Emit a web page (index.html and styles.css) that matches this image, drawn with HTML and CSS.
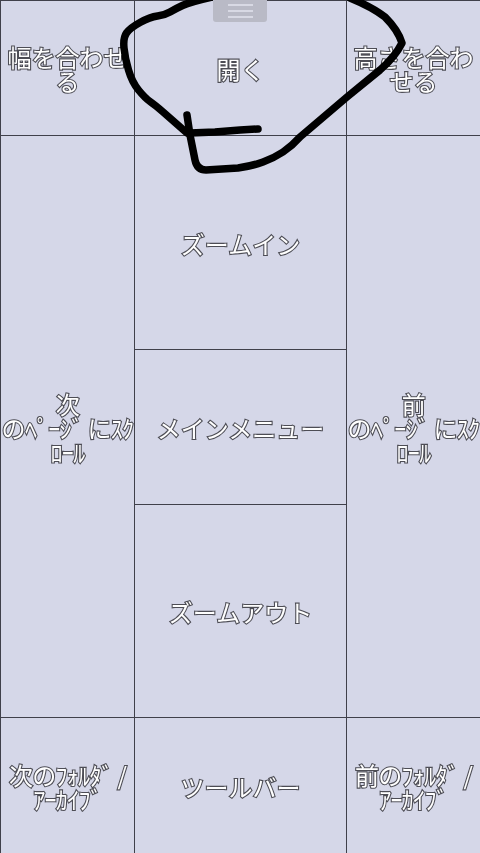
FILE: index.html
```html
<!DOCTYPE html>
<html lang="ja">
<head>
<meta charset="utf-8">
<title>タップ領域</title>
<link rel="stylesheet" href="styles.css">
</head>
<body>
<main class="grid">
  <div class="cell top left c-fitw">幅を合わせる</div>
  <div class="cell top c-open">開く</div>
  <div class="cell top last c-fith">高さを合わせる</div>
  <div class="cell left tight c-next">次<br>のﾍﾟｰｼﾞ にｽｸﾛｰﾙ</div>
  <div class="cell c-in">ズームイン</div>
  <div class="cell last tight c-prev">前<br>のﾍﾟｰｼﾞ にｽｸﾛｰﾙ</div>
  <div class="cell c-menu">メインメニュー</div>
  <div class="cell c-out">ズームアウト</div>
  <div class="cell left tight c-nextf">次のﾌｫﾙﾀﾞ / ｱｰｶｲﾌﾞ</div>
  <div class="cell c-tool">ツールバー</div>
  <div class="cell last tight c-prevf">前のﾌｫﾙﾀﾞ / ｱｰｶｲﾌﾞ</div>
</main>
<svg class="scribble" viewBox="0 0 480 853" aria-hidden="true">
  <path d="M212 -3 Q190 2 182.5 5.5 Q175 9 170 12 Q165 15 157.5 16 Q150 17 140 22.5 Q130 28 126.5 33 Q123 38 124 48 Q125 58 128.5 70 Q132 82 138.5 90 Q145 98 150 101.5 Q155 105 162.5 111.5 L187 133"/>
  <path d="M187 115 L190 135 L195 160 Q197 170 206 170 L238 168 Q252 166 263 162 Q274 158 283 152 Q292 146 300 137 L347 97 L380 70 Q395 57 402 43 Q398 30 385 17 Q372 7 350 -2"/>
  <path d="M190 133 L215 132 L240 130 L258 129"/>
</svg>
<div class="handle" aria-hidden="true"><span></span><span></span><span></span></div>
</body>
</html>
```
FILE: styles.css
```css
html, body {
  margin: 0;
  padding: 0;
  height: 853px;
  overflow: hidden;
  background: #d5d7e8;
}
.grid {
  display: grid;
  grid-template-columns: 135px 212px 133px;
  grid-template-rows: 136px 214px 155px 213px 135px;
  width: 480px;
  height: 853px;
  will-change: transform;
  font-family: "Noto Sans CJK JP", "Noto Sans", sans-serif;
  font-size: 24px;
  font-weight: 400;
  line-height: 24px;
  color: #fff;
}
.cell {
  display: block;
  align-content: center;
  box-sizing: border-box;
  padding-top: 2px;
  text-align: center;
  border-right: 1px solid #40404a;
  border-bottom: 1px solid #40404a;
  -webkit-text-stroke: 2.2px #4d4d55;
  paint-order: stroke fill;
}
.top { border-top: 1px solid #40404a; }
.left { border-left: 1px solid #40404a; }
.last { border-right: 0; }
.tight { letter-spacing: -0.7px; }
.c-in { grid-column: 2; grid-row: 2; }
.c-menu { grid-column: 2; grid-row: 3; }
.c-out { grid-column: 2; grid-row: 4; }
.c-next { grid-column: 1; grid-row: 2 / span 3; }
.c-prev { grid-column: 3; grid-row: 2 / span 3; }
.c-nextf { grid-column: 1; grid-row: 5; border-bottom: 0; }
.c-tool { grid-column: 2; grid-row: 5; border-bottom: 0; }
.c-prevf { grid-column: 3; grid-row: 5; border-bottom: 0; }
.scribble {
  position: absolute;
  left: 0;
  top: 0;
  width: 480px;
  height: 853px;
  fill: none;
  stroke: #000;
  stroke-width: 7.5;
  stroke-linecap: round;
  stroke-linejoin: round;
}
.handle {
  position: absolute;
  left: 213px;
  top: 0;
  width: 54px;
  height: 22px;
  background: #b9bac6;
  border-radius: 0 0 3px 3px;
  display: flex;
  flex-direction: column;
  align-items: center;
  gap: 4px;
  padding-top: 4px;
  box-sizing: border-box;
}
.handle span {
  width: 25px;
  height: 2px;
  background: #d8d9e4;
}
```
